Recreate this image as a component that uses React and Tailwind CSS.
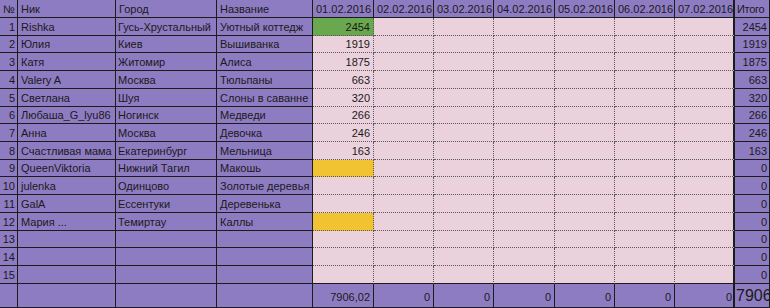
import React from "react";

const rows = [
  ["1", "Rishka", "Гусь-Хрустальный", "Уютный коттедж", "2454", "green", "2454"],
  ["2", "Юлия", "Киев", "Вышиванка", "1919", "", "1919"],
  ["3", "Катя", "Житомир", "Алиса", "1875", "", "1875"],
  ["4", "Valery A", "Москва", "Тюльпаны", "663", "", "663"],
  ["5", "Светлана", "Шуя", "Слоны в саванне", "320", "", "320"],
  ["6", "Любаша_G_lyu86", "Ногинск", "Медведи", "266", "", "266"],
  ["7", "Анна", "Москва", "Девочка", "246", "", "246"],
  ["8", "Счастливая мама", "Екатеринбург", "Мельница", "163", "", "163"],
  ["9", "QueenViktoria", "Нижний Тагил", "Макошь", "", "yellow", "0"],
  ["10", "julenka", "Одинцово", "Золотые деревья", "", "", "0"],
  ["11", "GalA", "Ессентуки", "Деревенька", "", "", "0"],
  ["12", "Мария ...", "Темиртау", "Каллы", "", "yellow", "0"],
  ["13", "", "", "", "", "", "0"],
  ["14", "", "", "", "", "", "0"],
  ["15", "", "", "", "", "", "0"],
];

const dates = ["01.02.2016", "02.02.2016", "03.02.2016", "04.02.2016", "05.02.2016", "06.02.2016", "07.02.2016"];

const P = "bg-[#8e7cc3] border-r border-b border-[#1c1c1c] overflow-hidden whitespace-nowrap flex items-end pb-[1px]";
const PINKB = "border-r border-b border-dotted border-[#5a5a5a] overflow-hidden whitespace-nowrap flex items-end justify-end pr-[3px] pb-[1px]";

export default function App() {
  return (
    <div
      className="w-[770px] h-[308px] overflow-hidden bg-white text-[#1a1a1a] text-[11px] leading-[13px]"
      style={{ fontFamily: '"Liberation Sans", Arial, sans-serif' }}
    >
      <div className="grid grid-cols-[18px_98px_101px_96px_61px_60px_60px_61px_60px_60px_60px_35px] grid-rows-[18px_repeat(15,17.73px)_1fr] h-[308px]">
        {/* header */}
        <div className={P + " pl-[3px]"}>№</div>
        <div className={P + " pl-[3px]"}>Ник</div>
        <div className={P + " pl-[3px]"}>Город</div>
        <div className={P + " pl-[3px]"}>Название</div>
        {dates.map((d, i) => (
          <div key={d} className={P + " pl-[3px]" + (i === 6 ? " border-r-2" : "")}>
            {d}
          </div>
        ))}
        <div className={P + " pl-[2px] tracking-[-0.3px]"}>Итого</div>

        {rows.map((r, ri) => {
          const last = ri === 14;
          const pinkBase = PINKB + (last ? " [border-bottom-style:solid] border-b-[#1c1c1c]" : "");
          const firstBg =
            r[5] === "green" ? " bg-[#6aa84f]" : r[5] === "yellow" ? " bg-[#f1c232]" : " bg-[#ead1dc]";
          return (
            <React.Fragment key={ri}>
              <div className={P + " justify-end pr-[2px]"}>{r[0]}</div>
              <div className={P + " pl-[3px]"}>{r[1]}</div>
              <div className={P + " pl-[2px]"}>{r[2]}</div>
              <div className={P + " pl-[3px]"}>{r[3]}</div>
              <div className={pinkBase + firstBg}>{r[4]}</div>
              {[1, 2, 3, 4, 5, 6].map((c) => (
                <div
                  key={c}
                  className={
                    pinkBase +
                    " bg-[#ead1dc]" +
                    (c === 6 ? " [border-right-style:solid] border-r-2 border-r-[#1c1c1c]" : "")
                  }
                />
              ))}
              <div className={P + " justify-end pr-[2px]"}>{r[6]}</div>
            </React.Fragment>
          );
        })}

        {/* totals */}
        <div className={P} />
        <div className={P} />
        <div className={P} />
        <div className={P} />
        <div className={P + " justify-end pr-[3px] pb-[3px]"}>7906,02</div>
        {[1, 2, 3, 4, 5].map((c) => (
          <div key={c} className={P + " justify-end pr-[3px] pb-[3px]"}>0</div>
        ))}
        <div className={P + " justify-end pr-[1px] pb-[3px] border-r-2"}>0</div>
        <div className={P + " pl-[1px] pb-[2px] text-[16px] leading-[18px] overflow-hidden"}>7906,02</div>
      </div>
    </div>
  );
}
